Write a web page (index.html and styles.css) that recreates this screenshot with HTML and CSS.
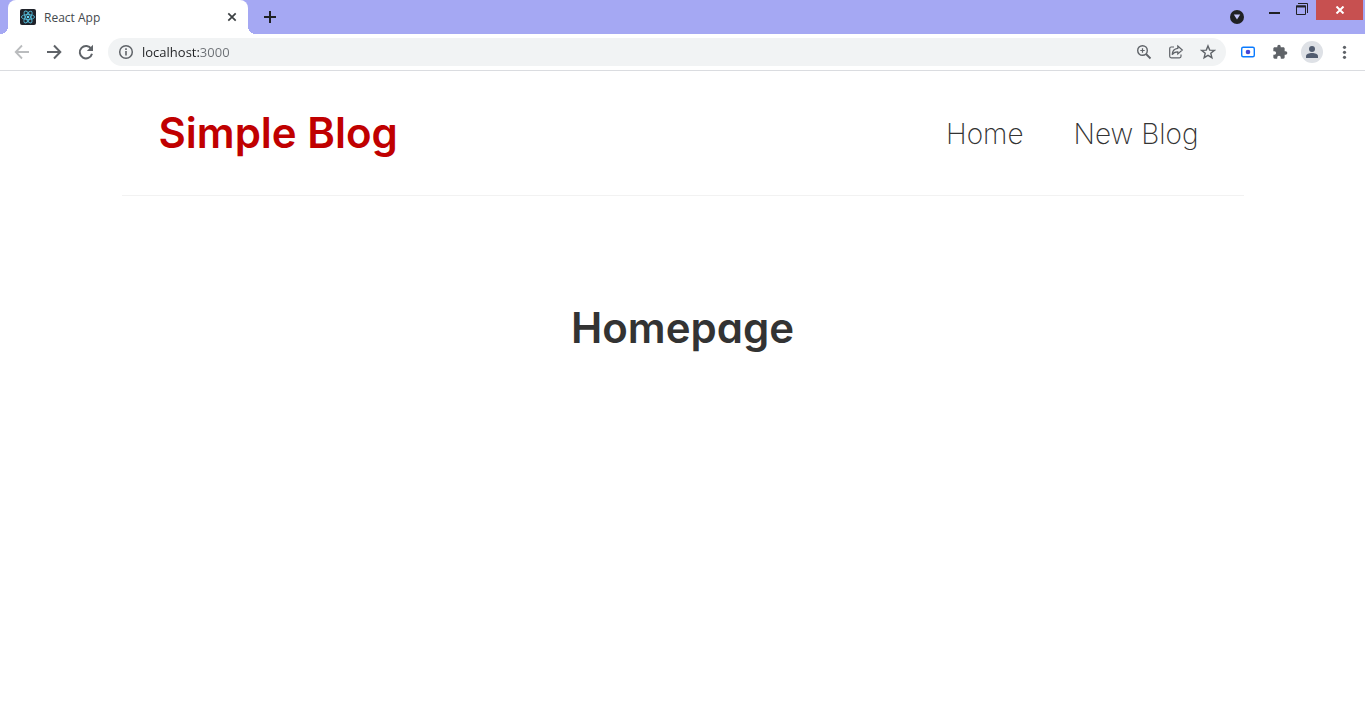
FILE: index.html
```html
<!DOCTYPE html>
<html lang="en">
<head>
<meta charset="utf-8">
<title>React App</title>
<link rel="stylesheet" href="styles.css">
</head>
<body>
<div class="browser">
  <div class="tabstrip">
    <div class="tab">
      <svg class="favicon" viewBox="0 0 16 16"><rect width="16" height="16" rx="2" fill="#20232a"/><g fill="none" stroke="#53b9d6" stroke-width=".9"><ellipse cx="8" cy="8" rx="6.6" ry="2.5"/><ellipse cx="8" cy="8" rx="6.6" ry="2.5" transform="rotate(60 8 8)"/><ellipse cx="8" cy="8" rx="6.6" ry="2.5" transform="rotate(120 8 8)"/></g><circle cx="8" cy="8" r="1.3" fill="#61dafb"/></svg>
      <span class="tab-title">React App</span>
      <button class="tab-close" aria-label="Close tab"><svg viewBox="0 0 16 16"><path d="M4.3 4.3l7.4 7.4M11.7 4.3l-7.4 7.4" stroke="#3c4043" stroke-width="1.7"/></svg></button>
    </div>
    <button class="new-tab" aria-label="New tab"><svg viewBox="0 0 16 16"><path d="M8 2v12M2 8h12" stroke="#202124" stroke-width="2"/></svg></button>
    <div class="window-controls">
      <button class="tab-search" aria-label="Search tabs"><svg viewBox="0 0 16 16"><circle cx="8" cy="8" r="7" fill="#202124"/><path d="M4.800 5.500h6.400L8 10.600z" fill="#c3c5fa"/></svg></button>
      <button class="minimize" aria-label="Minimize"><svg viewBox="0 0 12 12"><path d="M0 11h11" stroke="#202124" stroke-width="2"/></svg></button>
      <button class="restore" aria-label="Restore"><svg viewBox="0 0 12 12" fill="none" stroke="#202124"><path d="M.5 3v8.500h9V3z"/><path d="M0 3.500h10" stroke-width="2"/><path d="M2 .5h9.500V10"/></svg></button>
      <button class="close" aria-label="Close"><svg viewBox="0 0 10 8"><path d="M1.500.5l7 7M8.500.5l-7 7" stroke="#fff" stroke-width="2"/></svg></button>
    </div>
  </div>
  <div class="toolbar">
    <div class="history">
      <button aria-label="Back"><svg viewBox="0 0 20 20" fill="none" stroke="#babcbe" stroke-width="1.800"><path d="M17 10H4M10 3.500L3.700 10l6.300 6.500"/></svg></button>
      <button aria-label="Forward"><svg viewBox="0 0 20 20" fill="none" stroke="#5f6368" stroke-width="2"><path d="M3 10h13M10 3.500l6.300 6.500-6.300 6.500"/></svg></button>
      <button aria-label="Reload"><svg viewBox="0 0 20 20"><path d="M15.300 7A6.200 6.200 0 1 0 16 11.800" fill="none" stroke="#5f6368" stroke-width="2"/><path d="M17 2.800V9h-6.200z" fill="#5f6368"/></svg></button>
    </div>
    <div class="omnibox">
      <button aria-label="Site information"><svg viewBox="0 0 16 16"><circle cx="8" cy="8" r="6.300" fill="none" stroke="#5f6368" stroke-width="1.500"/><path d="M7.200 7h1.600v4.500H7.200zM7.200 4.300h1.600v1.600H7.200z" fill="#5f6368"/></svg></button>
      <input class="address" type="text" value="localhost:3000" aria-label="Address" spellcheck="false">
      <div class="page-actions">
        <button aria-label="Zoom"><svg viewBox="0 0 16 16" fill="none" stroke="#5f6368" stroke-width="1.400"><circle cx="6.500" cy="6.500" r="4.800"/><path d="M10 10l4.500 4.500" stroke-width="1.800"/><path d="M6.500 4.300v4.400M4.300 6.500h4.400" stroke-width="1.200"/></svg></button>
        <button aria-label="Share"><svg viewBox="0 0 16 16" fill="none" stroke="#5f6368" stroke-width="1.200"><path d="M6 3H3.200C2.300 3 1.700 3.600 1.700 4.500v7.800c0 .9.600 1.500 1.500 1.500h8.300c.9 0 1.500-.6 1.500-1.500V10.500"/><path d="M9.800 2l4.500 4-4.500 4V7.800C7 7.700 5.200 8.800 4.200 10.800 4.300 7.400 6.300 4.800 9.800 4.400z"/></svg></button>
        <button aria-label="Bookmark"><svg viewBox="0 0 16 16"><path d="M8 1.900l1.700 4.200 4.600.3-3.500 2.900 1.100 4.400L8 11.300l-3.900 2.400 1.100-4.400-3.500-2.900 4.600-.3z" fill="none" stroke="#5f6368" stroke-width="1.400"/></svg></button>
      </div>
    </div>
    <div class="extensions">
      <button aria-label="Screen capture"><svg viewBox="0 0 16 16"><rect x="1.700" y="3.200" width="12.600" height="9.600" rx="1.500" fill="#fff" stroke="#0a7bff" stroke-width="1.400"/><circle cx="8" cy="8" r="2.300" fill="#4747d5"/></svg></button>
      <button aria-label="Extensions"><svg viewBox="0 0 24 24"><path d="M20.500 11H19V7c0-1.100-.9-2-2-2h-4V3.500a2.500 2.500 0 0 0-5 0V5H4c-1.100 0-2 .9-2 2v3.800h1.500a2.700 2.700 0 0 1 0 5.400H2V20c0 1.100.9 2 2 2h3.800v-1.500a2.700 2.700 0 0 1 5.400 0V22H17c1.100 0 2-.9 2-2v-4h1.500a2.500 2.500 0 0 0 0-5z" fill="#5f6368"/></svg></button>
      <button class="profile" aria-label="Profile"><svg viewBox="0 0 22 22"><circle cx="11" cy="11" r="11" fill="#dee1e6"/><circle cx="11" cy="8" r="3" fill="#515c70"/><path d="M5 17v-1.800C5 13 8 12 11 12s6 1 6 3.200V17z" fill="#515c70"/></svg></button>
      <button aria-label="Menu"><svg viewBox="0 0 16 16" fill="#5f6368"><circle cx="8.500" cy="3.300" r="1.600"/><circle cx="8.500" cy="8.300" r="1.600"/><circle cx="8.500" cy="13.300" r="1.600"/></svg></button>
    </div>
  </div>
</div>
<header class="navbar">
  <h1>Simple Blog</h1>
  <nav class="links">
    <a href="#home">Home</a>
    <a href="#create">New Blog</a>
  </nav>
</header>
<main class="content">
  <h2>Homepage</h2>
</main>
</body>
</html>
```

FILE: styles.css
```css
* { box-sizing: border-box; margin: 0; }

body {
  background: #fff;
  color: #333;
  font-family: Inter, sans-serif;
  font-feature-settings: "cv11";
}

button {
  display: grid;
  place-items: center;
  padding: 0;
  border: 0;
  background: none;
}

svg { display: block; width: 16px; height: 16px; }

.tabstrip {
  display: flex;
  height: 34px;
  padding-left: 8px;
  background: #a5a8f3;
}

.tab {
  position: relative;
  display: flex;
  align-items: center;
  gap: 8px;
  width: 240px;
  padding: 0 8px 0 12px;
  border-radius: 8px 8px 0 0;
  background: #fff;
  font: 12px "Open Sans", sans-serif;
  color: #45494d;
}

.tab::before,
.tab::after {
  content: "";
  position: absolute;
  bottom: 0;
  width: 8px;
  height: 8px;
}

.tab::before {
  right: 100%;
  background: radial-gradient(circle at 0 0, transparent 8px, #fff 8px);
}

.tab::after {
  left: 100%;
  background: radial-gradient(circle at 100% 0, transparent 8px, #fff 8px);
}

.tab-title { flex: 1; }

.new-tab { margin-left: 14px; }

.window-controls {
  display: flex;
  align-items: flex-start;
  margin-left: auto;
  padding-right: 2px;
}

.tab-search { margin: 9px 24px 0 0; }
.minimize { margin: 2px 15px 0 0; }
.restore { margin: 3px 8px 0 0; }
.minimize svg, .restore svg { width: 12px; height: 12px; }
.close { width: 47px; height: 20px; background: #c75050; }
.close svg { width: 10px; height: 8px; }

.toolbar {
  display: flex;
  align-items: center;
  height: 37px;
  padding: 0 12px;
  border-bottom: 1px solid #dadce0;
}

.history { display: flex; gap: 12px; }
.history svg { width: 20px; height: 20px; }

.omnibox {
  display: flex;
  flex: 1;
  align-items: center;
  gap: 8px;
  height: 28px;
  margin: 0 14px 0 12px;
  padding: 0 10px;
  border-radius: 14px;
  background: #f1f3f4;
}

.address {
  flex: 1;
  min-width: 0;
  padding: 0;
  border: 0;
  outline: 0;
  background: linear-gradient(90deg, #202124 58px, #6b6f74 58px);
  background-clip: text;
  -webkit-background-clip: text;
  color: transparent;
  font: 13px/20px "Open Sans", sans-serif;
}

.page-actions { display: flex; gap: 16px; }

.extensions { display: flex; align-items: center; gap: 16px; margin-right: 1px; }
.extensions .profile { margin: 0 -3px; }
.profile svg { width: 22px; height: 22px; }

.navbar {
  display: flex;
  align-items: center;
  max-width: 1122px;
  margin: 0 auto;
  padding: 37px;
  border-bottom: 1px solid #f2f2f2;
}

h1, h2 {
  font-size: 42px;
  line-height: 50px;
  font-weight: 600;
}

h1 { color: #c00000; }

.links {
  display: flex;
  gap: 50px;
  margin-left: auto;
  padding: 2px 8px 0 0;
}

.links a {
  color: #333;
  font-size: 28px;
  font-weight: 200;
  line-height: 36px;
  text-decoration: none;
}

.content {
  max-width: 1122px;
  margin: 107px auto 0;
  text-align: center;
}
```
